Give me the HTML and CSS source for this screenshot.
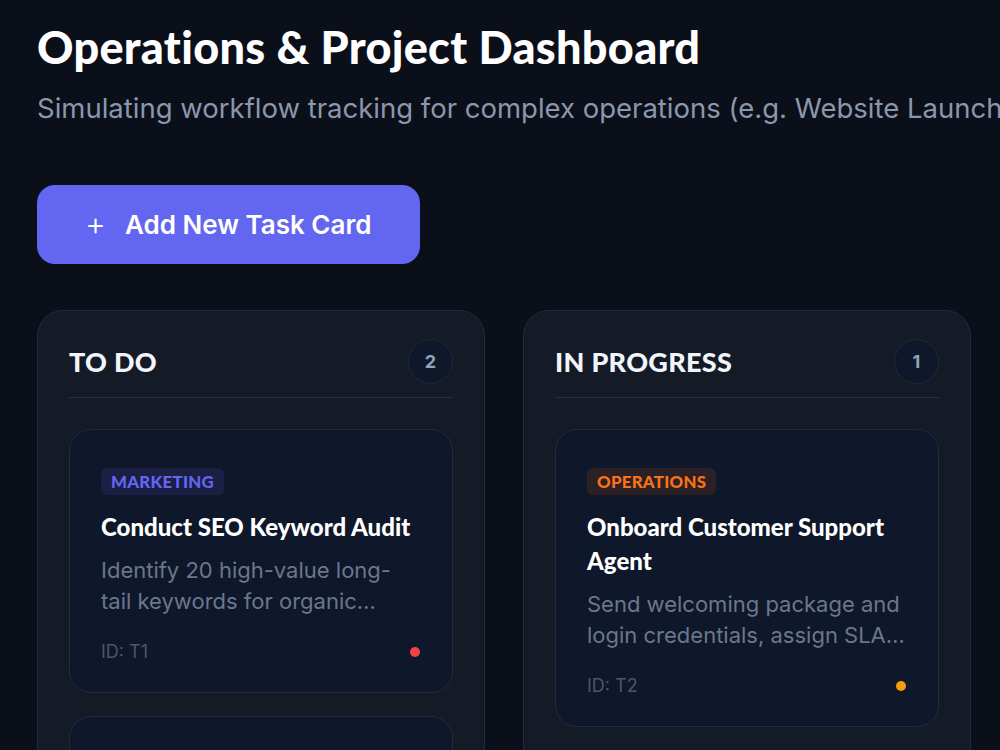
FILE: index.html
```html
<!DOCTYPE html>
<html>
<head>
	<title>Operations &amp; Project Dashboard</title>
	<link rel="stylesheet" href="styles.css">
</head>
<body>
<main class="page">
	<header class="intro">
		<h1 class="title">Operations &amp; Project Dashboard</h1>
		<p class="subtitle">Simulating workflow tracking for complex operations (e.g. Website Launch, Customer Onboarding).</p>
	</header>

	<button type="button" class="add-btn"><span class="plus">+</span>Add New Task Card</button>

	<section class="board">
		<div class="column">
			<div class="col-head">
				<h2 class="col-title">TO DO</h2>
				<span class="count">2</span>
			</div>
			<div class="cards">
				<article class="card">
					<span class="tag tag-marketing">MARKETING</span>
					<h3 class="card-title">Conduct SEO Keyword Audit</h3>
					<p class="card-desc">Identify 20 high-value long-tail keywords for organic search growth and map them to landing pages.</p>
					<div class="card-foot">
						<span class="card-id">ID: T1</span>
						<span class="dot dot-high"></span>
					</div>
				</article>
				<article class="card">
					<span class="tag tag-marketing">DESIGN</span>
					<h3 class="card-title">Refresh Landing Page Assets</h3>
					<p class="card-desc">Update hero imagery and icons for the launch campaign.</p>
					<div class="card-foot">
						<span class="card-id">ID: T3</span>
						<span class="dot dot-med"></span>
					</div>
				</article>
			</div>
		</div>

		<div class="column">
			<div class="col-head">
				<h2 class="col-title">IN PROGRESS</h2>
				<span class="count">1</span>
			</div>
			<div class="cards">
				<article class="card">
					<span class="tag tag-ops">OPERATIONS</span>
					<h3 class="card-title">Onboard Customer Support Agent</h3>
					<p class="card-desc">Send welcoming package and login credentials, assign SLA training modules and shadow sessions.</p>
					<div class="card-foot">
						<span class="card-id">ID: T2</span>
						<span class="dot dot-med"></span>
					</div>
				</article>
			</div>
		</div>

		<div class="column">
			<div class="col-head">
				<h2 class="col-title">DONE</h2>
				<span class="count">0</span>
			</div>
		</div>
	</section>
</main>
</body>
</html>
```

FILE: styles.css
```css
html {
	overflow: hidden;
}
body {
	margin: 0;
	background-color: #0b0f19;
	color: #f1f5f9;
	font-family: "Inter", "Liberation Sans", sans-serif;
}
.page {
	width: 1500px;
	padding: 19px 37px;
}
.title {
	margin: 0;
	font-family: "Lato", "Liberation Sans", sans-serif;
	font-weight: 900;
	font-size: 45px;
	line-height: 56px;
	letter-spacing: 0.3px;
	color: #ffffff;
}
.subtitle {
	margin: 16px 0 0 0;
	font-size: 27.5px;
	line-height: 34px;
	color: #8b97ab;
	white-space: nowrap;
}
.add-btn {
	display: flex;
	align-items: center;
	margin-top: 60px;
	width: 383px;
	height: 79px;
	padding: 0 0 0 48px;
	border: 0;
	border-radius: 18px;
	background-color: #6366f1;
	color: #ffffff;
	font-family: "Inter", "Liberation Sans", sans-serif;
	font-weight: 600;
	font-size: 26px;
}
.plus {
	font-size: 32px;
	font-weight: 300;
	margin-right: 19px;
	margin-top: -3px;
}
.board {
	display: flex;
	gap: 38px;
	margin-top: 46px;
	align-items: flex-start;
}
.column {
	width: 384px;
	min-height: 600px;
	padding: 28px 31px;
	background-color: #151a27;
	border: 1px solid #242a39;
	border-radius: 26px;
	flex-shrink: 0;
}
.col-head {
	display: flex;
	align-items: center;
	justify-content: space-between;
	padding-bottom: 13px;
	border-bottom: 1px solid #293042;
}
.col-title {
	margin: -1px 0 0 0;
	font-family: "Lato", "Liberation Sans", sans-serif;
	font-weight: 900;
	font-size: 27px;
	letter-spacing: 0.3px;
	color: #f1f5f9;
}
.count {
	display: flex;
	align-items: center;
	justify-content: center;
	width: 43px;
	height: 43px;
	border-radius: 50%;
	background-color: #0f172a;
	border: 1px solid #1f2838;
	color: #94a3b8;
	font-weight: 700;
	font-size: 18px;
}
.cards {
	display: flex;
	flex-direction: column;
	gap: 23px;
	margin-top: 31px;
}
.card {
	padding: 38px 31px 28px 31px;
	background-color: #0f172a;
	border: 1px solid #222b3c;
	border-radius: 22px;
}
.tag {
	display: inline-block;
	height: 27px;
	line-height: 27px;
	padding: 0 10px;
	border-radius: 6px;
	font-family: "Lato", "Liberation Sans", sans-serif;
	font-weight: 900;
	font-size: 16.8px;
	letter-spacing: 0.3px;
}
.tag-marketing {
	color: #6366f1;
	background-color: #1b1f44;
}
.tag-ops {
	color: #f97316;
	background-color: #2b2025;
}
.card-title {
	margin: 15px 0 0 0;
	font-family: "Lato", "Liberation Sans", sans-serif;
	font-weight: 900;
	font-size: 24px;
	line-height: 34px;
	color: #ffffff;
}
.card-desc {
	margin: 11px 0 0 0;
	font-size: 22px;
	line-height: 31px;
	color: #6b778c;
	display: -webkit-box;
	-webkit-line-clamp: 2;
	-webkit-box-orient: vertical;
	overflow: hidden;
}
.card-foot {
	display: flex;
	align-items: center;
	justify-content: space-between;
	margin-top: 23px;
	padding-right: 1px;
}
.card-id {
	font-size: 18px;
	line-height: 24px;
	color: #4b5669;
}
.dot {
	width: 10px;
	height: 10px;
	border-radius: 50%;
}
.dot-high {
	background-color: #ef4444;
}
.dot-med {
	background-color: #f59e0b;
}
```
